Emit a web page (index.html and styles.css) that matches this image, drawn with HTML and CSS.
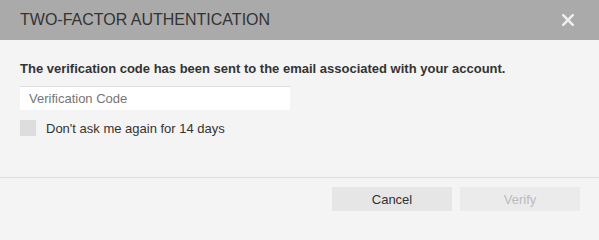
FILE: index.html
```html
<!DOCTYPE html>
<html lang="en">
<head>
<meta charset="utf-8">
<title>Two-Factor Authentication</title>
<link rel="stylesheet" href="styles.css">
</head>
<body>
<div class="dialog">
  <div class="header">
    <h1 class="title">TWO-FACTOR AUTHENTICATION</h1>
    <button class="close" aria-label="Close">
      <svg width="12" height="12" viewBox="0 0 12 12"><path d="M1.2 1.2 L10.8 10.8 M10.8 1.2 L1.2 10.8" stroke="#eeeeee" stroke-width="2.6" stroke-linecap="square"/></svg>
    </button>
  </div>
  <div class="content">
    <p class="message">The verification code has been sent to the email associated with your account.</p>
    <input class="code" type="text" placeholder="Verification Code">
    <label class="remember"><span class="box"></span><span>Don't ask me again for 14 days</span></label>
  </div>
  <div class="footer">
    <button class="btn">Cancel</button>
    <button class="btn disabled">Verify</button>
  </div>
</div>
</body>
</html>
```
FILE: styles.css
```css
html, body {
  margin: 0;
  padding: 0;
  background: #f4f4f4;
  font-family: "Liberation Sans", Arial, sans-serif;
  color: #333;
}
.dialog {
  width: 599px;
}
.header {
  height: 40px;
  background: #aaaaaa;
  display: flex;
  align-items: center;
  justify-content: space-between;
  padding: 0 25px 0 20px;
  box-sizing: border-box;
}
.title {
  margin: 0;
  font-size: 16px;
  font-weight: normal;
  color: #333;
}
.close {
  border: 0;
  background: none;
  padding: 0;
  width: 12px;
  height: 12px;
  display: block;
}
.close svg { display: block; }
.content {
  padding: 21px 20px 41px;
  border-bottom: 1px solid #dddddd;
  display: flex;
  flex-direction: column;
  align-items: flex-start;
}
.message {
  margin: 0;
  font-size: 13px;
  line-height: 15px;
  font-weight: bold;
  color: #333;
}
.code {
  margin-top: 10px;
  width: 270px;
  height: 24px;
  box-sizing: border-box;
  border: 0;
  border-top: 1px solid #dddddd;
  background: #ffffff;
  padding: 0 9px;
  font-family: inherit;
  font-size: 13px;
  color: #333;
  outline: none;
}
.code::placeholder { color: #757575; }
.remember {
  margin-top: 10px;
  display: flex;
  align-items: center;
  gap: 10px;
  font-size: 13px;
  color: #333;
}
.box {
  width: 16px;
  height: 16px;
  background: #dddddd;
}
.footer {
  display: flex;
  justify-content: flex-end;
  gap: 8px;
  padding: 9px 19px 6px;
}
.btn {
  width: 120px;
  height: 24px;
  border: 0;
  background: #e6e6e6;
  font-family: inherit;
  font-size: 13px;
  color: #333;
  padding: 0;
}
.btn.disabled {
  background: #ebebeb;
  color: #bbbbbb;
}
```
